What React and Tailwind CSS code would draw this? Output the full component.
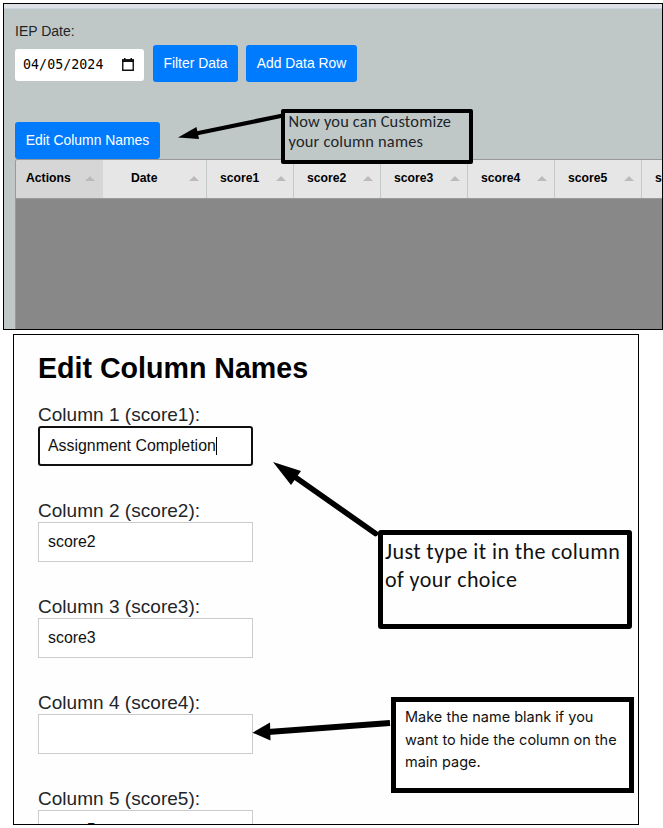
const scoreColumns = ["score1", "score2", "score3", "score4", "score5", "score6"];

const fields = [
  { label: "Column 1 (score1):", value: "Assignment Completion", focused: true },
  { label: "Column 2 (score2):", value: "score2" },
  { label: "Column 3 (score3):", value: "score3" },
  { label: "Column 4 (score4):", value: "" },
  { label: "Column 5 (score5):", value: "score5" },
];

function SortArrow() {
  return (
    <svg className="mr-[7px] h-[5px] w-[10px] shrink-0" viewBox="0 0 10 5">
      <path d="M0 5L5 0L10 5Z" fill="#bbb" />
    </svg>
  );
}

function HeaderCell({ children, className }) {
  return (
    <div className={"flex h-full shrink-0 items-center justify-between border-r border-[#c3c8ca] pb-[2px] " + className}>
      <span className="text-[12.2px] leading-4 font-bold whitespace-nowrap text-black">{children}</span>
      <SortArrow />
    </div>
  );
}

function Button({ children, className }) {
  return (
    <button
      className={
        "flex shrink-0 items-center justify-center rounded-[3px] bg-[#017bfe] text-[13.9px] leading-none whitespace-nowrap text-white " +
        className
      }
    >
      {children}
    </button>
  );
}

function DataPanel() {
  return (
    <section className="ml-[3px] flex h-[327px] w-[660px] flex-col overflow-hidden border border-black bg-[#c0c8c7]">
      <div className="h-[5px] shrink-0 border-b border-[#c9d5e0] bg-[#dee2e6]" />
      <div className="flex grow flex-col pl-[11px]">
        <div className="mt-[14px] h-4 text-[14px] leading-4 text-[#212529]">IEP Date:</div>
        <div className="mt-[6px] flex h-[37px] items-center">
          <div className="mt-[2px] flex h-8 w-[129px] items-center justify-between rounded-[3px] bg-white pr-[10px] pl-2">
            <span className="font-['DejaVu_Sans_Mono',monospace] text-[13.3px] leading-none tracking-[0.04px] text-black">
              04/05/2024
            </span>
            <svg className="h-[13px] w-[12px]" viewBox="0 0 12 13">
              <path d="M0.75 2H11.25V12.25H0.75Z" fill="none" stroke="#111" strokeWidth="1.4" />
              <path d="M0 1.3H12V4H0ZM2 0H3.5V2H2ZM8.5 0H10V2H8.5Z" fill="#111" />
            </svg>
          </div>
          <Button className="ml-[9px] h-[37px] w-[85px]">Filter Data</Button>
          <Button className="ml-2 h-[37px] w-[111px]">Add Data Row</Button>
        </div>
        <Button className="mt-[40px] h-[37px] w-[145px]">Edit Column Names</Button>
        <div className="flex grow flex-col overflow-hidden rounded-tl-[3px] border-t border-l border-[#999] bg-[#888]">
          <div className="flex h-[39px] shrink-0 overflow-hidden border-b border-[#999] bg-[#e6e6e6]">
            <HeaderCell className="w-[87px] border-r-[#d6d6d6] bg-[#d6d6d6] pl-[10px]">Actions</HeaderCell>
            <HeaderCell className="w-[104px] pl-7">Date</HeaderCell>
            {scoreColumns.map((name) => (
              <HeaderCell key={name} className="w-[87px] pl-[13px]">
                {name}
              </HeaderCell>
            ))}
          </div>
        </div>
      </div>
    </section>
  );
}

function Field({ label, value, focused }) {
  return (
    <div className="h-[96px] shrink-0">
      <div className="h-[22px] text-[19px] leading-[22px] tracking-[0.03px] whitespace-nowrap text-[#212529]">{label}</div>
      <div
        className={
          "flex h-10 w-[215px] items-center bg-white text-[15.9px] leading-none whitespace-nowrap text-[#111] " +
          (focused ? "rounded-[3px] border-2 border-[#101010] pl-2" : "border border-[#ccc] pl-[9px]")
        }
      >
        {value}
        {focused && <span className="h-[18px] w-px bg-black" />}
      </div>
    </div>
  );
}

function EditPanel() {
  return (
    <section className="mt-1 ml-[13px] flex h-[491px] w-[626px] flex-col overflow-hidden border border-black bg-[#fefefe] pl-6">
      <h1 className="mt-[17px] mb-[13px] h-8 shrink-0 text-[28.6px] leading-8 font-bold whitespace-nowrap text-black">
        Edit Column Names
      </h1>
      <div className="mt-[7px] flex flex-col">
        {fields.map((field) => (
          <Field key={field.label} {...field} />
        ))}
      </div>
    </section>
  );
}

function Arrows() {
  return (
    <svg className="absolute top-0 left-0 h-[828px] w-[663px]" viewBox="0 0 663 828">
      <g stroke="#000" fill="#000">
        <path d="M196 133.5L283 115.5" strokeWidth="4.2" />
        <path d="M178 137.5L196.5 127L199 139Z" stroke="none" />
        <path d="M295 477L375.5 533.5" strokeWidth="5.6" strokeLinecap="round" />
        <path d="M273 462L301 471L291 485Z" stroke="none" />
        <path d="M268 732L390 723" strokeWidth="6" />
        <path d="M252.5 732.7L270 722.5L270.5 740.5Z" stroke="none" />
      </g>
    </svg>
  );
}

export default function App() {
  return (
    <main className="relative h-[828px] w-[663px] overflow-hidden bg-white pt-[3px] font-['Liberation_Sans',Arial,sans-serif]">
      <DataPanel />
      <EditPanel />
      <Arrows />
      <div className="absolute top-[109px] left-[281px] h-[55px] w-[191.5px] rounded-[2px] border-4 border-black bg-[#c0c8c7] pl-[3.5px] font-[Carlito,Lato,sans-serif] text-[16.4px] leading-5 tracking-[0.2px] whitespace-nowrap text-[#212529]">
        <div className="-mt-[2px]">Now you can Customize</div>
        <div>your column names</div>
      </div>
      <div className="absolute top-[530px] left-[378px] h-[99px] w-[254px] rounded-[3px] border-[5.5px] border-black bg-[#fefefe] pt-[3px] pl-[2px] font-[Carlito,Lato,sans-serif] text-[22px] leading-7 tracking-[0.42px] whitespace-nowrap text-[#111]">
        <div>Just type it in the column</div>
        <div>of your choice</div>
      </div>
      <div className="absolute top-[697px] left-[391px] h-[96px] w-[243px] border-[5px] border-black bg-white pt-[4px] pl-[9px] font-[Inter,sans-serif] text-[14.5px] leading-[22.7px] whitespace-nowrap text-[#111]">
        <div>Make the name blank if you</div>
        <div>want to hide the column on the</div>
        <div>main page.</div>
      </div>
    </main>
  );
}
